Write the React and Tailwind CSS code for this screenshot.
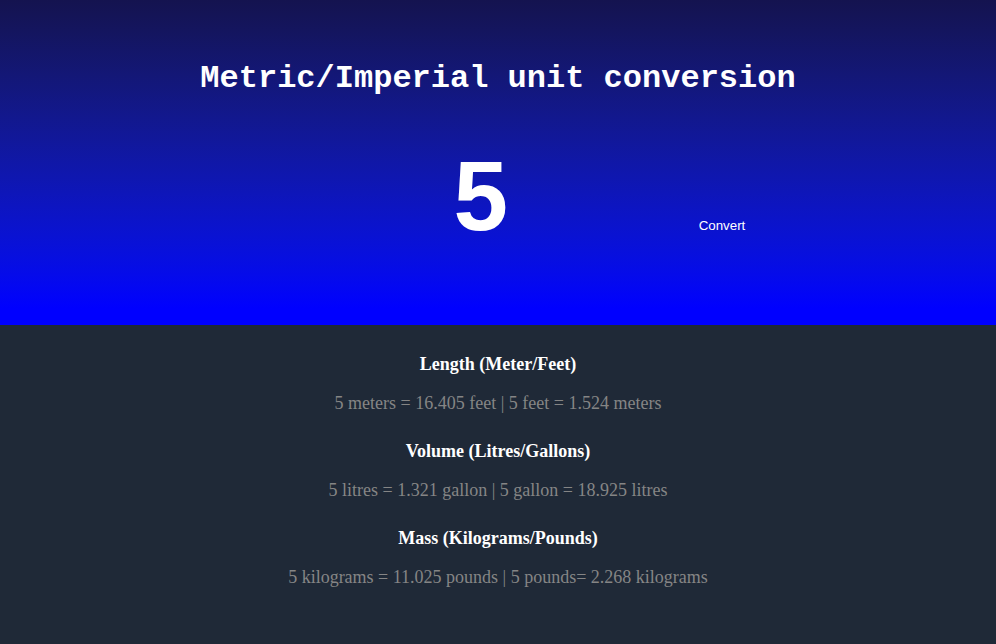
import React, { useState } from 'react'

const results = [
  {
    title: 'Length (Meter/Feet)',
    text: '5 meters = 16.405 feet | 5 feet = 1.524 meters',
  },
  {
    title: 'Volume (Litres/Gallons)',
    text: '5 litres = 1.321 gallon | 5 gallon = 18.925 litres',
  },
  {
    title: 'Mass (Kilograms/Pounds)',
    text: '5 kilograms = 11.025 pounds | 5 pounds= 2.268 kilograms',
  },
]

export default function App() {
  const [value, setValue] = useState('5')

  return (
    <div className="min-h-screen bg-[#1f2937] font-['Liberation_Serif',serif]">
      {/* Header with input */}
      <header className="h-[325px] bg-gradient-to-b from-[#14134f] to-[#0000ff] to-[95%] flex flex-col items-center">
        <h1 className="mt-[59px] text-[32px] leading-[40px] font-bold text-white font-['Liberation_Mono',monospace]">
          Metric/Imperial unit conversion
        </h1>
        <div className="mt-[42px] flex items-baseline pl-[36px]">
          <input
            value={value}
            onChange={(e) => setValue(e.target.value)}
            className="w-[412px] h-[110px] bg-transparent border-0 outline-none text-center text-white font-bold text-[98px] font-['Liberation_Sans',sans-serif]"
          />
          <button className="px-3 mb-[15px] text-white text-[13.33px] bg-transparent font-['Liberation_Sans',sans-serif]">
            Convert
          </button>
        </div>
      </header>

      {/* Conversion results */}
      <main className="pt-[29px] flex flex-col items-center gap-[27px]">
        {results.map((r) => (
          <section key={r.title} className="flex flex-col items-center gap-[18px]">
            <h2 className="text-[18px] leading-[21px] font-bold text-white">{r.title}</h2>
            <p className="text-[18px] leading-[21px] text-[#858585]">{r.text}</p>
          </section>
        ))}
      </main>
    </div>
  )
}
